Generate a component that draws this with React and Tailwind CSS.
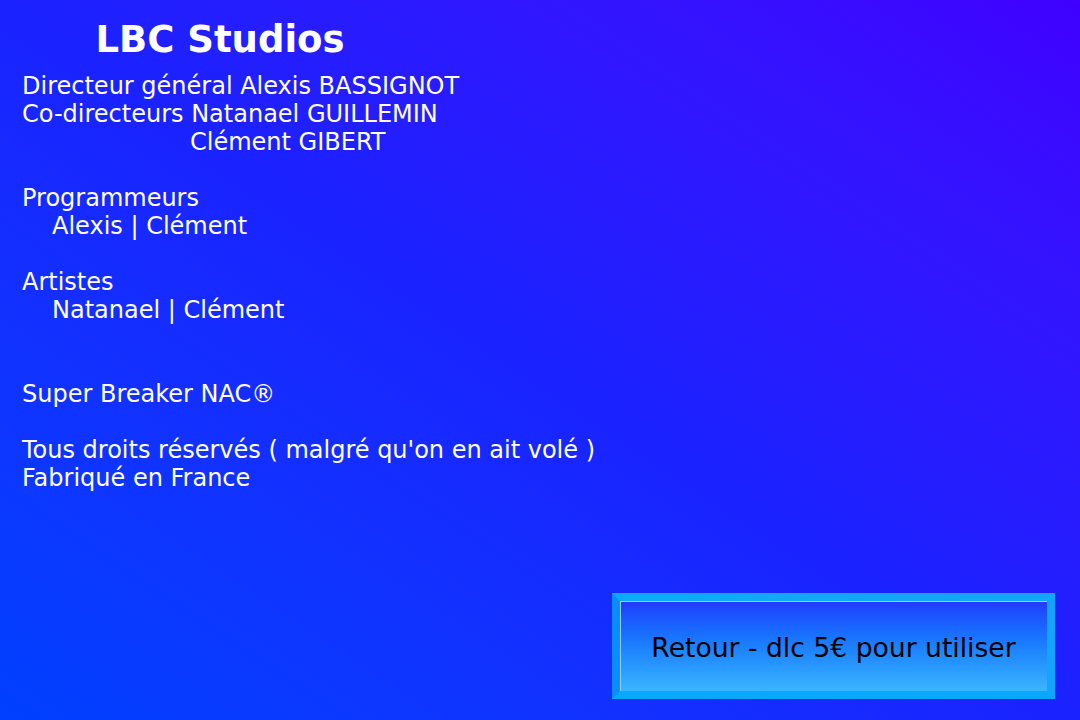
import React from "react";

const font = { fontFamily: '"DejaVu Sans", "Liberation Sans", sans-serif' };

function Line({ children, className = "" }) {
    return <div className={"h-[28px] leading-[28px] whitespace-nowrap " + className}>{children}</div>;
}

export default function App() {
    return (
        <div
            className="w-[1080px] h-[720px] bg-linear-to-tr from-[#0040ff] via-[#1a22ff] to-[#3f00ff] text-white flex flex-col"
            style={font}
        >
            <div className="w-[440px] pt-[18px] text-center text-[37px] leading-[44px] font-bold">
                LBC Studios
            </div>

            <div className="pl-[22px] pt-[10px] text-[24px]">
                <Line>Directeur général Alexis BASSIGNOT</Line>
                <Line>Co-directeurs Natanael GUILLEMIN</Line>
                <Line className="pl-[168px]">Clément GIBERT</Line>
                <Line />
                <Line>Programmeurs</Line>
                <Line className="pl-[30px]">Alexis | Clément</Line>
                <Line />
                <Line>Artistes</Line>
                <Line className="pl-[30px]">Natanael | Clément</Line>
                <Line />
                <Line />
                <Line>Super Breaker NAC®</Line>
                <Line />
                <Line>Tous droits réservés ( malgré qu'on en ait volé )</Line>
                <Line>Fabriqué en France</Line>
            </div>

            <div className="flex-1 flex items-end justify-end pr-[25px] pb-[21px]">
                <button
                    className="w-[443px] h-[106px] pt-[4px] border-[8px] border-t-[#10a8ff] border-l-[#0a8cff] border-b-[#08a8ff] border-r-[#12a4ff] bg-linear-to-b from-[#2238ff] to-[#3cb4ff] text-black text-[26.6px] shadow-[inset_1px_1px_0_#8fd0ff]"
                    style={font}
                >
                    Retour - dlc 5€ pour utiliser
                </button>
            </div>
        </div>
    );
}
